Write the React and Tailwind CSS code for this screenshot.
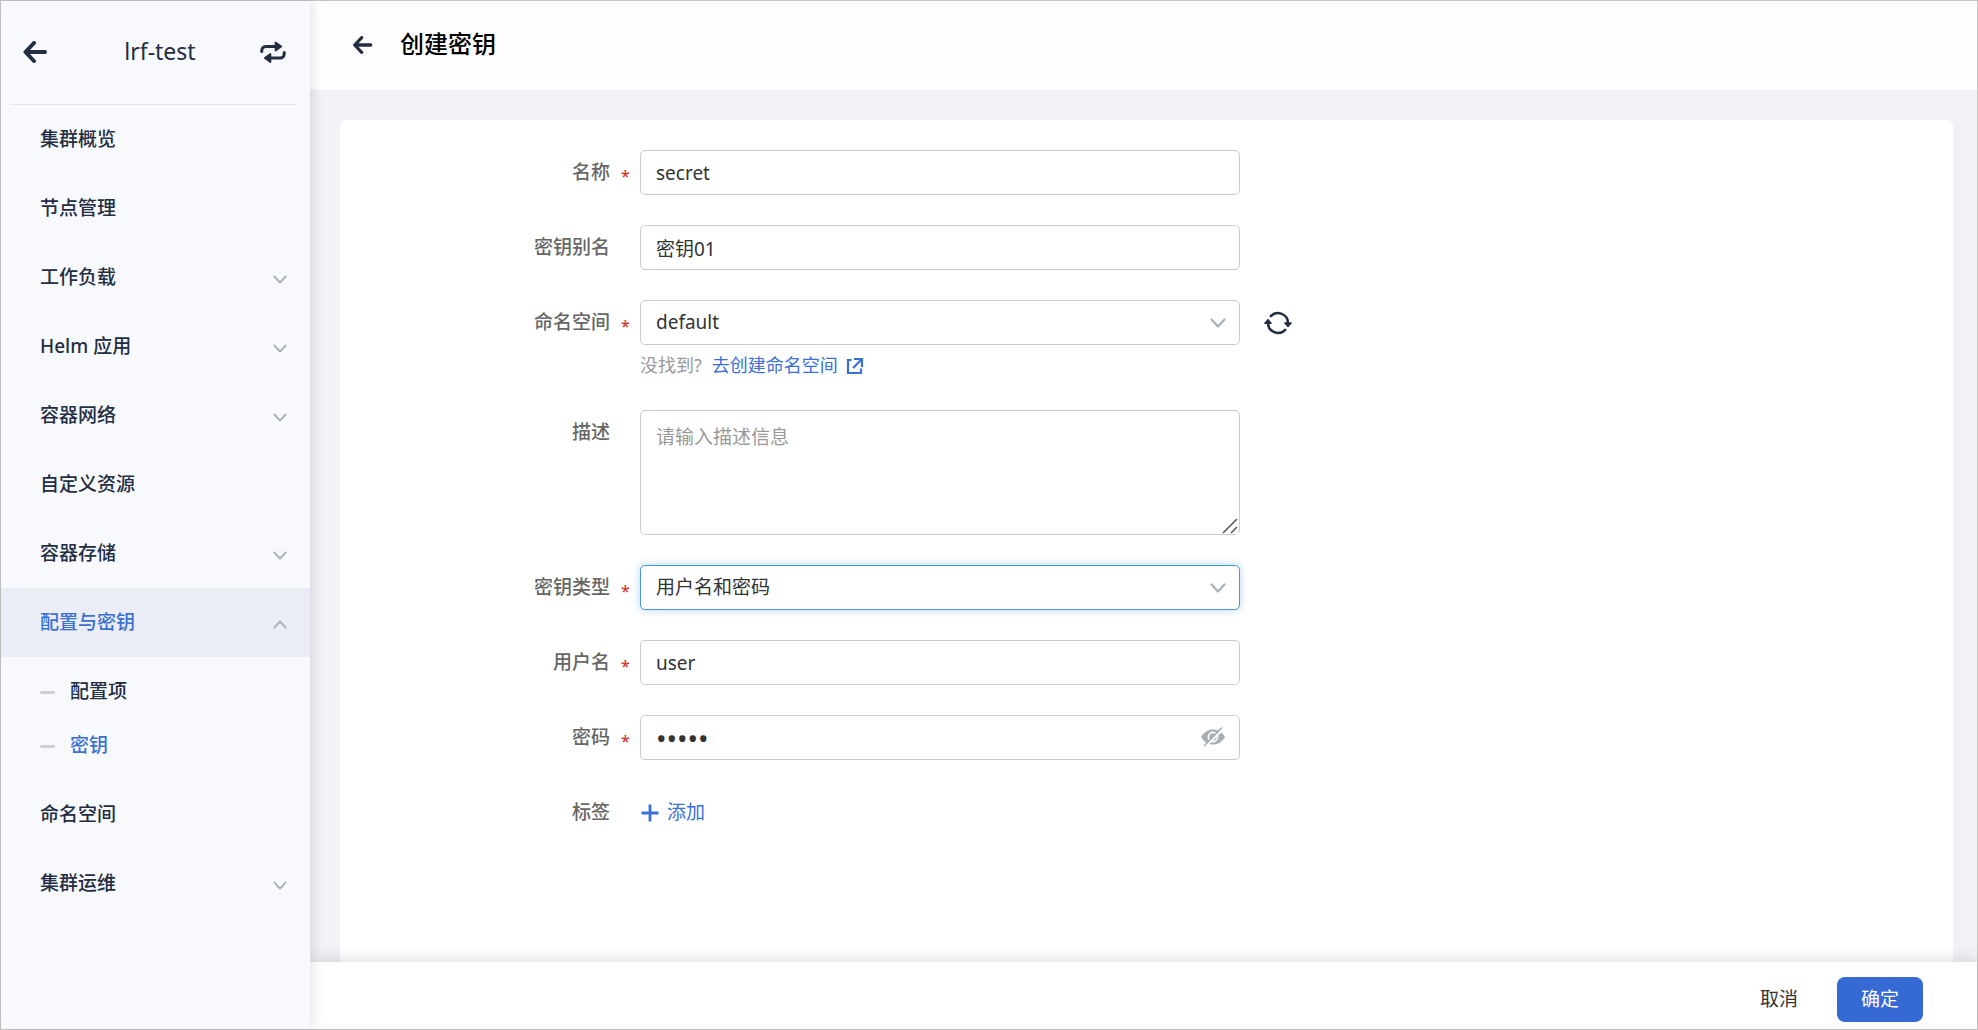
import { useState } from 'react';

const NAV = [
  { label: '集群概览' },
  { label: '节点管理' },
  { label: '工作负载', group: true },
  { label: 'Helm 应用', group: true },
  { label: '容器网络', group: true },
  { label: '自定义资源' },
  { label: '容器存储', group: true },
  {
    label: '配置与密钥',
    group: true,
    open: true,
    children: [{ label: '配置项' }, { label: '密钥', active: true }],
  },
  { label: '命名空间' },
  { label: '集群运维', group: true },
];

function ArrowLeft({ className }) {
  return (
    <svg viewBox="0 0 24 22" className={className} fill="none" stroke="currentColor" strokeWidth="4" strokeLinecap="round" strokeLinejoin="round" aria-hidden="true">
      <path d="M11 2 2.500 11 11 20M3 11h19" />
    </svg>
  );
}

function SwapIcon({ className }) {
  return (
    <svg viewBox="0 0 26 24" className={className} fill="none" stroke="currentColor" strokeWidth="3" strokeLinecap="round" aria-hidden="true">
      <path d="M1.800 11.500V10.500a4 4 0 0 1 4-4H16" />
      <path d="M24.200 12.500v1.500a4 4 0 0 1-4 4H10" />
      <path d="M15.600 2.500v8l5.600-4zM10.400 14v8L4.800 18z" fill="currentColor" strokeWidth="1.800" strokeLinejoin="round" />
    </svg>
  );
}

function Chevron({ className }) {
  return (
    <svg viewBox="0 0 16 10" className={className} fill="none" stroke="currentColor" strokeWidth="2.200" strokeLinecap="round" strokeLinejoin="round" aria-hidden="true">
      <path d="m1.500 1.500 6.500 7 6.500-7" />
    </svg>
  );
}

function RefreshIcon() {
  return (
    <svg viewBox="0 0 28 24" className="h-6 w-7" fill="none" stroke="currentColor" strokeWidth="2.500" strokeLinecap="round" aria-hidden="true">
      <path d="M6.800 5.200A10 10 0 0 1 24 12" />
      <path d="M21.200 18.800A10 10 0 0 1 4 12" />
      <path d="M20.900 12h6.200L24 15.600zM.9 12.200h6.200L4 8.600z" fill="currentColor" strokeWidth="1.400" strokeLinejoin="round" />
    </svg>
  );
}

function ExternalIcon() {
  return (
    <svg viewBox="0 0 18 18" className="h-[18px] w-[18px]" fill="none" stroke="currentColor" strokeWidth="2.200" aria-hidden="true">
      <path d="M5.500 3H2v13h13v-4.500M8 2h8v8M16 2 7 11" />
    </svg>
  );
}

function EyeOffIcon() {
  return (
    <svg viewBox="0 0 24 20" className="h-5 w-6" fill="none" aria-hidden="true">
      <path d="M0 10C3 5 7.200 2.500 12 2.500S21 5 24 10c-3 5-7.200 7.500-12 7.500S3 15 0 10z" fill="currentColor" />
      <circle cx="12" cy="10" r="4.600" stroke="white" strokeWidth="1.600" />
      <path d="M4.500 19.500 22 2.500" stroke="white" strokeWidth="2" />
      <path d="M3.500 18.500 20.500 1" stroke="currentColor" strokeWidth="1.600" strokeLinecap="round" />
    </svg>
  );
}

function Sidebar() {
  return (
    <aside className="relative z-10 flex w-[309px] shrink-0 flex-col bg-[#f7f9fd] text-[#242e42] shadow-[2px_0_12px_rgba(0,0,0,0.12)]">
      <div className="ml-[9px] mr-3.5 flex h-[104px] items-center justify-between border-b border-[#e3e5ea] pb-0.5 pl-3 pr-2.5">
        <button type="button" aria-label="返回"><ArrowLeft className="h-[22px] w-[26px]" /></button>
        <span className="pl-3 text-[23px]">lrf-test</span>
        <button type="button" aria-label="切换集群"><SwapIcon className="h-6 w-[26px]" /></button>
      </div>
      <nav className="text-[19px] font-medium">
        {NAV.map((item) => (
          <div key={item.label}>
            <a
              href="#"
              className={`flex h-[69px] items-center justify-between pb-px pl-[39px] pr-[23px] ${item.open ? 'bg-[#eaedf5] text-[#3a70d1]' : ''}`}
            >
              {item.label}
              {item.group && <Chevron className={`mt-1 h-[9px] w-3.5 text-[#aaaeb6] ${item.open ? 'rotate-180' : ''}`} />}
            </a>
            {item.children && (
              <div className="pb-[7px] pt-2">
                {item.children.map((child) => (
                  <a key={child.label} href="#" className={`flex h-[54px] items-center gap-[15px] pb-px pl-[39px] ${child.active ? 'text-[#3a70d1]' : ''}`}>
                    <span className="mt-0.5 h-[3px] w-[15px] rounded-full bg-[#ccced8]" />
                    {child.label}
                  </a>
                ))}
              </div>
            )}
          </div>
        ))}
      </nav>
    </aside>
  );
}

function Row({ label, htmlFor, required, children }) {
  return (
    <div className="flex items-start">
      <div className="flex h-[45px] w-[300px] shrink-0 items-center justify-end pr-[11px] text-[19px] font-medium text-[#666]">
        <label htmlFor={htmlFor}>{label}</label>
        <span className="ml-[11px] mt-1.5 w-2 text-center text-[16px] leading-5 text-[#d0382b]">{required ? '*' : ''}</span>
      </div>
      <div className="min-w-0 max-w-[600px] flex-1">{children}</div>
    </div>
  );
}

const FIELD = 'block h-[45px] w-full rounded-[5px] border border-[#c9cad6] bg-white px-[15px] text-[#333] outline-none';

function SelectField({ id, options, focused }) {
  return (
    <div className="relative">
      <select
        id={id}
        className={`block h-[45px] w-full appearance-none rounded-[5px] border bg-white px-[15px] text-[19px] text-[#333] outline-none ${
          focused ? 'border-[#4a98dc] shadow-[0_0_8px_rgba(74,152,220,0.4)]' : 'border-[#c9cad6]'
        }`}
      >
        {options.map((o) => <option key={o}>{o}</option>)}
      </select>
      <Chevron className="pointer-events-none absolute right-3.5 top-[18px] h-[10px] w-4 text-[#a9aeb6]" />
    </div>
  );
}

export default function App() {
  const [visible, setVisible] = useState(false);
  return (
    <div className="flex min-h-screen border border-[#c4c4c4] bg-[#f1f2f6] font-['Noto_Sans','Noto_Sans_CJK_SC',sans-serif]">
      <Sidebar />
      <div className="flex min-w-0 flex-1 flex-col">
        <header className="flex h-[89px] items-center bg-[#fffdfe] pb-1 pl-[42px]">
          <button type="button" aria-label="返回上一页" className="mt-0.5 text-[#242e42]"><ArrowLeft className="h-[18px] w-[21px]" /></button>
          <h1 className="ml-[27px] text-[24px] font-medium text-black">创建密钥</h1>
        </header>
        <main className="flex flex-1 flex-col pl-[30px] pr-6 pt-[30px]">
          <form id="secret-form" className="flex flex-1 flex-col gap-[30px] rounded-t-md bg-white pr-6 pt-[30px]">
            <Row label="名称" htmlFor="name" required>
              <input id="name" className={`${FIELD} text-[19px]`} defaultValue="secret" />
            </Row>
            <Row label="密钥别名" htmlFor="alias">
              <input id="alias" className={`${FIELD} text-[19px]`} defaultValue="密钥01" />
            </Row>
            <Row label="命名空间" htmlFor="namespace" required>
              <div className="relative">
                <SelectField id="namespace" options={['default']} />
                <button type="button" aria-label="刷新" className="absolute left-full top-[11px] ml-6 text-[#242e42]"><RefreshIcon /></button>
              </div>
              <p className="flex h-[35px] items-center pt-1.5 text-[18px] text-[#999]">
                没找到?
                <a href="#" className="ml-2.5 flex items-center gap-2 text-[#3a70d8]">去创建命名空间<ExternalIcon /></a>
              </p>
            </Row>
            <Row label="描述" htmlFor="description">
              <div className="relative">
                <textarea
                  id="description"
                  placeholder="请输入描述信息"
                  className="block h-[125px] w-full resize-y rounded-[5px] border border-[#c9cad6] px-[15px] py-3 text-[19px] leading-7 text-[#333] outline-none placeholder:text-[#999]"
                />
                <svg viewBox="0 0 16 16" className="pointer-events-none absolute bottom-px right-0.5 h-4 w-4 bg-white" stroke="#555" strokeWidth="1.500" aria-hidden="true">
                  <path d="M1 15 15 1M9 15l6-6" />
                </svg>
              </div>
            </Row>
            <Row label="密钥类型" htmlFor="type" required>
              <SelectField id="type" options={['用户名和密码']} focused />
            </Row>
            <Row label="用户名" htmlFor="user" required>
              <input id="user" className={`${FIELD} text-[19px]`} defaultValue="user" />
            </Row>
            <Row label="密码" htmlFor="password" required>
              <div className="relative">
                <input
                  id="password"
                  type={visible ? 'text' : 'password'}
                  autoComplete="off"
                  className={`${FIELD} ${visible ? 'text-[19px]' : 'text-[28px]'}`}
                  defaultValue="12345"
                />
                <button type="button" aria-label="显示密码" onClick={() => setVisible(!visible)} className="absolute right-[15px] top-3 text-[#a9aeb6]"><EyeOffIcon /></button>
              </div>
            </Row>
            <Row label="标签" htmlFor="add-label">
              <button id="add-label" type="button" className="flex h-[45px] items-center gap-2 pl-px text-[19px] text-[#3a70d8]">
                <svg viewBox="0 0 18 18" className="h-[18px] w-[18px]" stroke="currentColor" strokeWidth="2.800" aria-hidden="true">
                  <path d="M9 .5v17M.5 9h17" />
                </svg>
                添加
              </button>
            </Row>
          </form>
        </main>
        <footer className="flex h-[67px] items-center justify-end bg-white pr-[54px] pt-2 text-[19px] shadow-[0_-3px_14px_rgba(0,0,0,0.12)]">
          <button type="button" className="mr-[39px] text-[#333]">取消</button>
          <button type="submit" form="secret-form" className="h-[45px] rounded-lg bg-[#356ad5] px-6 text-white">确定</button>
        </footer>
      </div>
    </div>
  );
}
